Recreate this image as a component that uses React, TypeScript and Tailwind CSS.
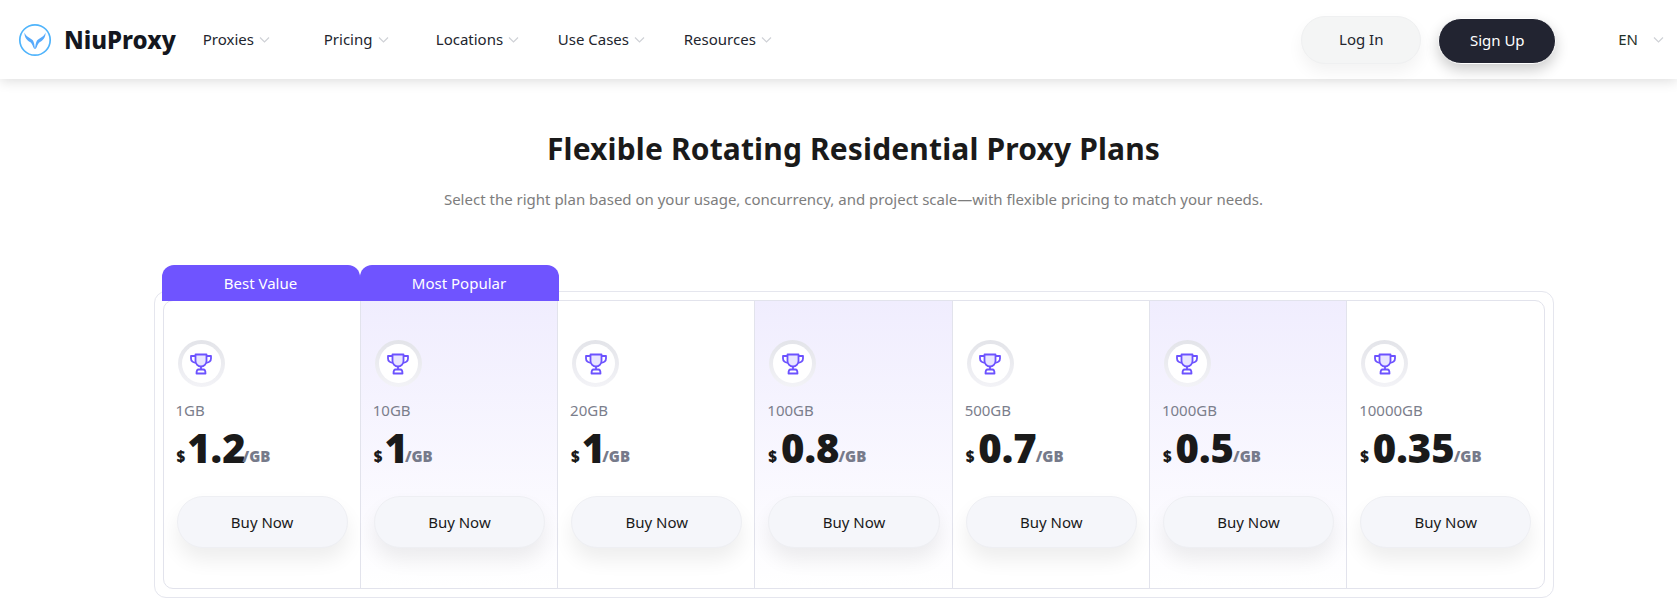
const NAV = [
  { label: "Proxies", width: "w-[121px]" },
  { label: "Pricing", width: "w-[112px]" },
  { label: "Locations", width: "w-[122px]" },
  { label: "Use Cases", width: "w-[126px]" },
  { label: "Resources", width: "w-[100px]" },
];

const PLANS = [
  { size: "1GB", price: "1.2", tint: false },
  { size: "10GB", price: "1", tint: true },
  { size: "20GB", price: "1", tint: false },
  { size: "100GB", price: "0.8", tint: true },
  { size: "500GB", price: "0.7", tint: false },
  { size: "1000GB", price: "0.5", tint: true },
  { size: "10000GB", price: "0.35", tint: false },
];

function Chevron() {
  return (
    <svg width="11" height="8" viewBox="0 0 11 8" fill="none" className="ml-[5px] mt-[1px]">
      <path d="M1 1.500 5.500 6 10 1.500" stroke="#cfd1d6" strokeWidth="1.200" />
    </svg>
  );
}

function Logo() {
  return (
    <svg width="34" height="34" viewBox="0 0 34 34" fill="none">
      <defs>
        <linearGradient id="logoRing" x1="0" y1="0" x2="34" y2="34">
          <stop offset="0" stopColor="#4fb4fb" />
          <stop offset="1" stopColor="#6a9bff" />
        </linearGradient>
      </defs>
      <circle cx="17" cy="17" r="15.200" stroke="url(#logoRing)" strokeWidth="1.700" />
      <path
        d="M6.500 9.500C8 14 12 14.500 14.500 17c1.300 1.300 1.800 3.500 2.500 9 .7-5.500 1.200-7.700 2.500-9C22 14.500 26 14 27.500 9.500c.3 5.500-3 8-5.500 9.500-1.500.9-2.300 2.500-3.200 5-.5 1.300-1.100 2-1.800 2s-1.300-.7-1.800-2c-.9-2.500-1.700-4.100-3.200-5-2.500-1.500-5.800-4-5.500-9.500Z"
        fill="#57aafc"
      />
    </svg>
  );
}

function Trophy() {
  return (
    <svg width="24" height="24" viewBox="0 0 24 24" fill="none" stroke="#6c52ff" strokeWidth="1.800" strokeLinejoin="round">
      <path d="M6.500 2.500h11v6.500a5.500 5.500 0 0 1-11 0V2.500Z" fill="#e8e5ff" />
      <path d="M6.500 4H2v2.500a4 4 0 0 0 4.800 4M17.500 4H22v2.500a4 4 0 0 1-4.800 4" />
      <path d="M12 14.500v3" />
      <path d="M9.500 17.500h5c1 0 2 1.500 2 4h-9c0-2.500 1-4 2-4Z" />
    </svg>
  );
}

function PlanColumn({ size, price, tint, last }: { size: string; price: string; tint: boolean; last: boolean }) {
  const isDecimalZero = price.startsWith("0");
  return (
    <div
      className={`flex-1 pl-[13px] pr-[12px] pt-[39px] ${last ? "" : "border-r border-[#e2e3ec]"} ${
        tint ? "bg-gradient-to-b from-[#f0edfe] to-white" : ""
      }`}
    >
      <div className="ml-[1px] flex h-[47px] w-[47px] items-center justify-center rounded-full bg-gradient-to-b from-[#e3e4e9] to-[#f3f3f7]">
        <div className="flex h-[39px] w-[39px] items-center justify-center rounded-full bg-white">
          <Trophy />
        </div>
      </div>
      <div className="mt-[13px] -ml-[1px] text-[15px] leading-[20px] text-[#7b7e8c]">{size}</div>
      <div className="mt-[4px] flex h-[48px] items-end">
        <span className={`mb-[6px] text-[15px] leading-[20px] font-black text-[#1a1a1a] ${isDecimalZero ? "mr-[4px]" : "mr-[2px]"}`}>
          $
        </span>
        <span className="text-[40px] leading-[48px] font-black text-[#1a1a1a]">{price}</span>
        <span className={`mb-[6px] text-[15px] leading-[20px] font-black text-[#767a8a] ${isDecimalZero ? "-ml-[1px]" : "-ml-[3px]"}`}>
          /GB
        </span>
      </div>
      <button className="mt-[24px] h-[52px] w-full rounded-full border border-[#eeeff3] bg-[#f5f6fa] text-[15px] text-[#1a1a1a] shadow-[0_12px_20px_rgba(0,0,0,0.07)]">
        Buy Now
      </button>
    </div>
  );
}

export default function App() {
  return (
    <div className="h-[615px] overflow-hidden bg-white font-['Noto_Sans',sans-serif]">
      <header className="relative flex h-[79px] items-center bg-white pl-[18px] pr-[13px] shadow-[0_2px_12px_rgba(0,0,0,0.14)]">
        <Logo />
        <span className="ml-[12px] text-[24px] font-extrabold text-[#141720]">NiuProxy</span>
        <nav className="ml-[27px] flex items-center">
          {NAV.map((item) => (
            <div key={item.label} className={`flex items-center text-[15px] text-[#22252e] ${item.width}`}>
              {item.label}
              <Chevron />
            </div>
          ))}
        </nav>
        <div className="ml-auto flex items-center">
          <button className="h-[48px] w-[120px] rounded-full border border-[#eff0f1] bg-[#f4f5f5] text-[15px] text-[#22252e] shadow-[0_8px_16px_rgba(0,0,0,0.05)]">
            Log In
          </button>
          <button className="ml-[17px] mt-[2px] h-[46px] w-[118px] rounded-full border border-white bg-[#222431] text-[15px] text-white shadow-[0_6px_14px_rgba(0,0,0,0.2)]">
            Sign Up
          </button>
          <span className="ml-[62px] text-[15px] text-[#1f3028]">EN</span>
          <span className="ml-[10px]">
            <Chevron />
          </span>
        </div>
      </header>

      <main className="flex flex-col items-center pl-[30px]">
        <h1 className="mt-[48px] text-[30px] leading-[44px] font-bold tracking-[0.15px] text-[#1a1a1a]">
          Flexible Rotating Residential Proxy Plans
        </h1>
        <p className="mt-[17px] text-[15px] leading-[22px] text-[#7d7d7d]">
          Select the right plan based on your usage, concurrency, and project scale—with flexible pricing to match your needs.
        </p>

        <div className="relative mt-[81px] h-[307px] w-[1400px] rounded-[12px] border border-[#e5e6ee] p-[8px]">
          <div className="absolute left-[7px] top-[-27px] flex">
            <div className="flex h-[36px] w-[198px] items-center justify-center rounded-t-[12px] bg-[#6f54ff] text-[15px] text-white">
              Best Value
            </div>
            <div className="flex h-[36px] w-[199px] items-center justify-center rounded-t-[12px] bg-[#6f54ff] text-[15px] text-white">
              Most Popular
            </div>
          </div>
          <div className="flex h-full overflow-hidden rounded-[10px] border border-[#e2e3ec]">
            {PLANS.map((plan, i) => (
              <PlanColumn key={plan.size} {...plan} last={i === PLANS.length - 1} />
            ))}
          </div>
        </div>
      </main>
    </div>
  );
}
